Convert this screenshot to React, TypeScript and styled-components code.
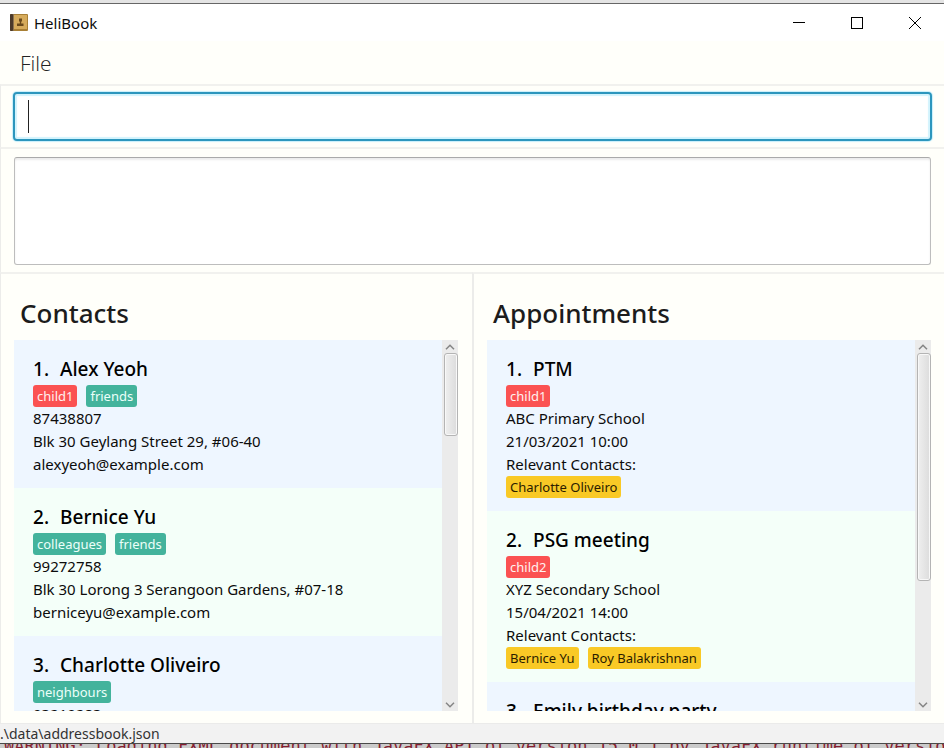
import React, { useRef } from "react";
import styled, { createGlobalStyle } from "styled-components";

const GlobalStyle = createGlobalStyle`
  * { box-sizing: border-box; }
  body {
    margin: 0;
    background: #cfcfcf;
    font-family: "Noto Sans", "Open Sans", sans-serif;
    color: #0c0c0c;
  }
`;

const CREAM = "#fffffa";

const Desktop = styled.div`
  display: flex;
  flex-direction: column;
  height: 100vh;
  padding-top: 3px;
  overflow: hidden;
  background: #e4e4e4;
`;

const Window = styled.main`
  flex: 1;
  min-height: 0;
  display: flex;
  flex-direction: column;
  border-top: 1px solid #666;
  border-bottom: 1px solid #4a4a4a;
  background: ${CREAM};
`;

const TitleBar = styled.header`
  display: flex;
  align-items: center;
  height: 37px;
  padding-left: 10px;
  background: #fff;
`;

const Title = styled.h1`
  flex: 1;
  margin: 0 0 0 6px;
  font-size: 15px;
  font-weight: 400;
  line-height: 20px;
`;

const WindowButton = styled.button`
  display: grid;
  place-items: center;
  width: 58px;
  height: 36px;
  padding: 0;
  border: 0;
  background: transparent;
`;

const MenuBar = styled.nav`
  display: flex;
  align-items: center;
  height: 43px;
  padding-left: 20px;
`;

const MenuButton = styled.button`
  padding: 0;
  border: 0;
  background: transparent;
  font-family: "Open Sans", "Noto Sans", sans-serif;
  font-size: 21px;
  font-weight: 300;
  line-height: 28px;
  color: #222;
`;

const Section = styled.section`
  border-top: 2px solid #f1f1ee;
  border-left: 1px solid #ececea;
`;

const CommandSection = styled(Section)`
  padding: 6px 12px;
`;

const CommandInput = styled.input`
  display: block;
  width: 100%;
  height: 49px;
  padding: 0 13px;
  border: 2px solid #2c96bd;
  border-radius: 4px;
  outline: 0;
  box-shadow: 0 0 1px 1px #c8effb, inset 0 0 1px 2px #d2f3fd;
  background: #fff;
  font: 18px "Noto Sans", sans-serif;
`;

const Caret = styled.span`
  position: absolute;
  left: 15px;
  top: 8px;
  width: 1px;
  height: 33px;
  background: #222;
`;

const CommandField = styled.label`
  position: relative;
  display: block;
`;

const ResultSection = styled(Section)`
  padding: 8px 13px 7px;
`;

const ResultArea = styled.textarea`
  display: block;
  width: 100%;
  height: 108px;
  padding: 8px;
  border: 1px solid #bdbdbd;
  border-top-color: #aaa;
  border-radius: 3px;
  outline: 0;
  resize: none;
  box-shadow: inset 0 2px 2px #ededed;
  background: #fff;
  font: 15px "Noto Sans", sans-serif;
`;

const Panels = styled.div`
  flex: 1;
  min-height: 0;
  display: grid;
  grid-template-columns: 1fr 1fr;
`;

const Panel = styled(Section)`
  display: flex;
  flex-direction: column;
  min-width: 0;
  min-height: 0;
  padding: 22px 14px 12px 13px;
  & + & {
    padding-right: 13px;
    border-left-width: 2px;
  }
`;

const PanelTitle = styled.h2`
  margin: 0 0 10px 6px;
  font-size: 26px;
  font-weight: 500;
  line-height: 34px;
  color: #1c1c1c;
`;

const ListFrame = styled.div`
  flex: 1;
  min-height: 0;
  display: flex;
`;

const List = styled.ol`
  flex: 1;
  min-width: 0;
  margin: 0;
  padding: 0;
  overflow: hidden;
  list-style: none;
`;

const Card = styled.li`
  padding: 15px 19px 12px;
  background: #f4fff9;
  &:nth-child(odd) { background: #eef6ff; }
`;

const CardTitle = styled.h3`
  display: flex;
  gap: 11px;
  margin: 0 0 2px;
  font-size: 19px;
  font-weight: 500;
  line-height: 28px;
  color: #000;
`;

const Tags = styled.div`
  display: flex;
  gap: 9px;
`;

const People = styled(Tags)`
  padding-bottom: 1px;
`;

const tones = {
  child: { background: "#fb5252", color: "#fff0ee" },
  group: { background: "#43b39c", color: "#ecfff9" },
  person: { background: "#f9c926", color: "#2b1c00" },
};

type Tone = keyof typeof tones;

const Tag = styled.span<{ $tone: Tone }>`
  height: 22px;
  padding: 0 4px;
  border-radius: 3px;
  background: ${(p) => tones[p.$tone].background};
  color: ${(p) => tones[p.$tone].color};
  font-size: 13px;
  line-height: 22px;
  white-space: nowrap;
`;

const Line = styled.p`
  margin: 0;
  font-size: 15px;
  line-height: 23px;
  white-space: nowrap;
`;

const ScrollBar = styled.div`
  display: flex;
  flex-direction: column;
  width: 16px;
  background: #ebebeb;
`;

const ScrollButton = styled.button`
  display: grid;
  place-items: center;
  height: 13px;
  padding: 0;
  border: 0;
  background: transparent;
`;

const Track = styled.div`
  flex: 1;
  min-height: 0;
  padding-left: 2px;
`;

const Thumb = styled.div<{ $share: number }>`
  height: ${(p) => p.$share}%;
  border: 1px solid #b4b4b4;
  border-radius: 3px;
  box-shadow: inset 0 0 0 1px #f8f8f8;
  background: linear-gradient(90deg, #efefef, #dcdcdc);
`;

const StatusBar = styled.footer`
  height: 20px;
  border-top: 1px solid #ebebea;
  background: #f2f2f2;
  font-size: 14px;
  line-height: 19px;
  color: #333;
`;

const Console = styled.pre`
  display: flex;
  align-items: center;
  height: 4px;
  margin: 0;
  padding-left: 4px;
  overflow: hidden;
  background: #cbcbcb;
  color: #861f31;
  font: 17px "DejaVu Sans Mono", "Liberation Mono", monospace;
`;

type Item = {
  title: string;
  tags: { text: string; tone: Tone }[];
  lines: string[];
  people?: string[];
};

const contacts: Item[] = [
  {
    title: "Alex Yeoh",
    tags: [{ text: "child1", tone: "child" }, { text: "friends", tone: "group" }],
    lines: ["87438807", "Blk 30 Geylang Street 29, #06-40", "alexyeoh@example.com"],
  },
  {
    title: "Bernice Yu",
    tags: [{ text: "colleagues", tone: "group" }, { text: "friends", tone: "group" }],
    lines: ["99272758", "Blk 30 Lorong 3 Serangoon Gardens, #07-18", "berniceyu@example.com"],
  },
  {
    title: "Charlotte Oliveiro",
    tags: [{ text: "neighbours", tone: "group" }],
    lines: ["93210283"],
  },
];

const appointments: Item[] = [
  {
    title: "PTM",
    tags: [{ text: "child1", tone: "child" }],
    lines: ["ABC Primary School", "21/03/2021 10:00", "Relevant Contacts:"],
    people: ["Charlotte Oliveiro"],
  },
  {
    title: "PSG meeting",
    tags: [{ text: "child2", tone: "child" }],
    lines: ["XYZ Secondary School", "15/04/2021 14:00", "Relevant Contacts:"],
    people: ["Bernice Yu", "Roy Balakrishnan"],
  },
  { title: "Emily birthday party", tags: [], lines: [] },
];

function Chevron({ down }: { down?: boolean }) {
  return (
    <svg width="10" height="6" viewBox="0 0 10 6" fill="none" stroke="#858585" strokeWidth="1.5">
      <path d={down ? "M1 .8 5 4.8 9 .8" : "M1 5.2 5 1.2 9 5.2"} />
    </svg>
  );
}

function ItemPanel({ title, items, share }: { title: string; items: Item[]; share: number }) {
  const list = useRef<HTMLOListElement>(null);
  const scroll = (top: number) => list.current?.scrollBy({ top });
  return (
    <Panel aria-label={title}>
      <PanelTitle>{title}</PanelTitle>
      <ListFrame>
        <List ref={list}>
          {items.map((item, i) => (
            <Card key={item.title}>
              <CardTitle>
                <span>{i + 1}.</span>
                <span>{item.title}</span>
              </CardTitle>
              <Tags>
                {item.tags.map((t) => (
                  <Tag key={t.text} $tone={t.tone}>{t.text}</Tag>
                ))}
              </Tags>
              {item.lines.map((l) => (
                <Line key={l}>{l}</Line>
              ))}
              {item.people && (
                <People>
                  {item.people.map((p) => (
                    <Tag key={p} $tone="person">{p}</Tag>
                  ))}
                </People>
              )}
            </Card>
          ))}
        </List>
        <ScrollBar>
          <ScrollButton aria-label={`Scroll ${title} up`} onClick={() => scroll(-40)}>
            <Chevron />
          </ScrollButton>
          <Track>
            <Thumb $share={share} />
          </Track>
          <ScrollButton aria-label={`Scroll ${title} down`} onClick={() => scroll(40)}>
            <Chevron down />
          </ScrollButton>
        </ScrollBar>
      </ListFrame>
    </Panel>
  );
}

function BookIcon() {
  return (
    <svg width="18" height="17" viewBox="0 0 18 17">
      <rect width="18" height="17" rx="1" fill="#a87f35" />
      <rect x="4" y="1" width="13" height="14" fill="#d6ab5c" />
      <rect width="3" height="17" rx="1" fill="#4a392b" />
      <path d="M3.500 0v17" stroke="#8c7350" />
      <path d="M9 4.500h3v2.500l-.8 1v1.500h2.300V12H7V9.500h2.800V8L9 7z" fill="#69491c" />
    </svg>
  );
}

export default function App() {
  return (
    <>
      <GlobalStyle />
      <Desktop>
        <Window>
          <TitleBar>
            <BookIcon />
            <Title>HeliBook</Title>
            <WindowButton aria-label="Minimize">
              <svg width="12" height="12" stroke="#000"><path d="M0 5.500h12" /></svg>
            </WindowButton>
            <WindowButton aria-label="Maximize">
              <svg width="12" height="12" fill="none" stroke="#000"><rect x=".5" y=".5" width="11" height="11" /></svg>
            </WindowButton>
            <WindowButton aria-label="Close">
              <svg width="12" height="12" stroke="#000"><path d="M0 0 12 12M12 0 0 12" /></svg>
            </WindowButton>
          </TitleBar>
          <MenuBar>
            <MenuButton>File</MenuButton>
          </MenuBar>
          <CommandSection>
            <CommandField>
              <CommandInput aria-label="Command" />
              <Caret />
            </CommandField>
          </CommandSection>
          <ResultSection>
            <ResultArea aria-label="Result" readOnly />
          </ResultSection>
          <Panels>
            <ItemPanel title="Contacts" items={contacts} share={24} />
            <ItemPanel title="Appointments" items={appointments} share={66} />
          </Panels>
          <StatusBar>.\data\addressbook.json</StatusBar>
        </Window>
        <Console>WARNING: Loading FXML document with JavaFX API of version 15.0.1 by JavaFX runtime of version 11</Console>
      </Desktop>
    </>
  );
}
